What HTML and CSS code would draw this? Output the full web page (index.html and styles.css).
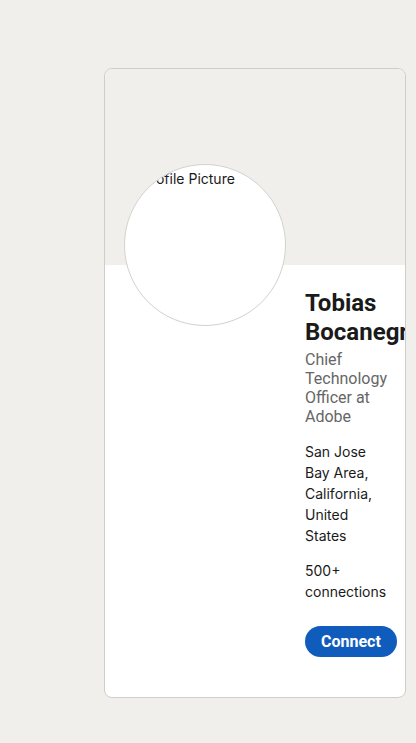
FILE: index.html
```html
<!DOCTYPE html>
<html lang="en">
<head>
<meta charset="utf-8">
<title>Tobias Bocanegra</title>
<link rel="stylesheet" href="styles.css">
</head>
<body>
  <div class="card">
    <div class="cover"></div>
    <div class="main">
      <div class="avatar"><span class="alt">Profile Picture</span></div>
      <div class="info">
        <h1 class="name">Tobias Bocanegra</h1>
        <p class="headline">Chief Technology Officer at Adobe</p>
        <p class="location">San Jose Bay Area, California, United States</p>
        <p class="connections">500+ connections</p>
        <button class="connect" type="button">Connect</button>
      </div>
    </div>
  </div>
</body>
</html>
```
FILE: styles.css
```css
html {
  background: #f0efeb;
}
body {
  margin: 0;
  padding: 68px 0 0 104px;
  background: #f0efeb;
  font-family: Inter, "Noto Sans", sans-serif;
  color: #1a1a1a;
}
.card {
  width: 302px;
  box-sizing: border-box;
  border: 1px solid #cfcdc9;
  border-radius: 8px;
  background: #fff;
  overflow: hidden;
}
.cover {
  height: 196px;
  background: #f0efeb;
}
.main {
  display: flex;
  align-items: flex-start;
  gap: 19px;
  padding: 0 20px 40px 19px;
}
.avatar {
  flex: none;
  width: 162px;
  height: 162px;
  box-sizing: border-box;
  margin-top: -101px;
  border: 1px solid #d3d1cd;
  border-radius: 50%;
  background: #fff;
  overflow: hidden;
}
.alt {
  display: block;
  padding: 5px 0 0 17px;
  font: 400 14px/17px Inter, sans-serif;
  color: #1a1a1a;
  white-space: nowrap;
}
.info {
  flex: 1;
  min-width: 0;
  padding-top: 24px;
}
.name {
  margin: 0;
  font: 700 24px/1.2 Roboto, "Liberation Sans", sans-serif;
  color: #1a1a1a;
}
.headline {
  margin: 3px 0 0;
  font: 400 16px/1.2 Roboto, "Liberation Sans", sans-serif;
  color: #666;
}
.location {
  margin: 15px 0 0;
  font: 400 14px/1.5 Inter, sans-serif;
}
.connections {
  margin: 14px 0 0;
  font: 400 14px/1.5 Inter, sans-serif;
}
.connect {
  display: block;
  margin-top: 24px;
  height: 31px;
  padding: 0 16px;
  border: none;
  border-radius: 16px;
  background: #0f5cbc;
  color: #fff;
  font: 700 16px/1 Roboto, "Liberation Sans", sans-serif;
  white-space: nowrap;
}
```
